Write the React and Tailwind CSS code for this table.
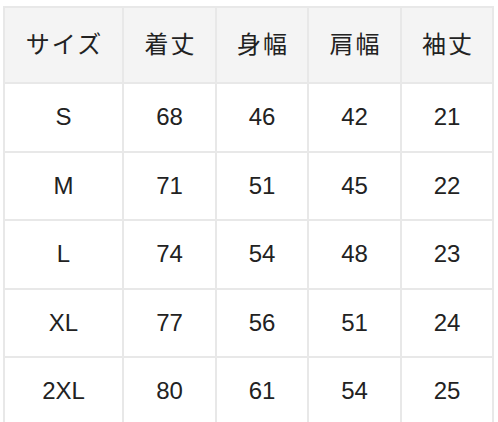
const headers = ["サイズ", "着丈", "身幅", "肩幅", "袖丈"];

const rows = [
  ["S", "68", "46", "42", "21"],
  ["M", "71", "51", "45", "22"],
  ["L", "74", "54", "48", "23"],
  ["XL", "77", "56", "51", "24"],
  ["2XL", "80", "61", "54", "25"],
];

export default function App() {
  return (
    <div className="min-h-screen bg-white pt-[6px] pl-[3px] overflow-hidden">
      <div
        className="w-[491px] grid grid-cols-[119px_93px_92px_93px_92px] border-t-2 border-l-2 border-[#e8e8e8] text-[#222]"
        style={{ fontFamily: '"Liberation Sans", "Noto Sans CJK JP", sans-serif' }}
      >
        {headers.map((h) => (
          <div
            key={h}
            className="h-[76px] flex items-center justify-center bg-[#f4f4f4] border-r-2 border-b-2 border-[#e8e8e8] text-[24px] tracking-[2px] pl-[2px]"
          >
            {h}
          </div>
        ))}
        {rows.map((r) =>
          r.map((c, i) => (
            <div
              key={r[0] + i}
              className="h-[68.5px] flex items-center justify-center border-r-2 border-b-2 border-[#e8e8e8] text-[24px]"
            >
              {c}
            </div>
          ))
        )}
      </div>
    </div>
  );
}
